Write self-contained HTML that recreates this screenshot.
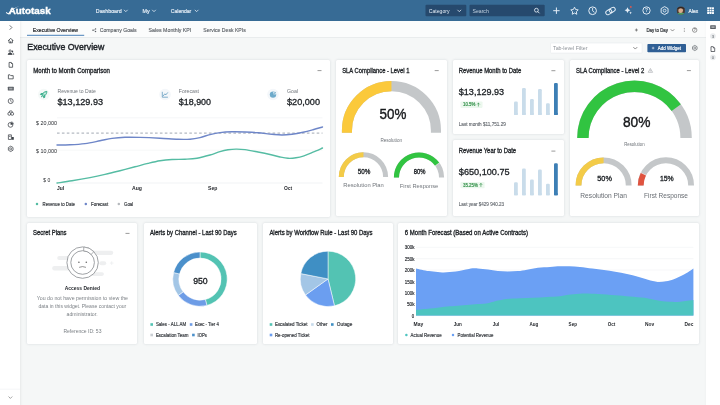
<!DOCTYPE html>
<html lang="en"><head><meta charset="utf-8"><title>Autotask - Executive Overview</title>
<style>
html,body{margin:0;padding:0}
body{width:720px;height:405px;overflow:hidden;background:#f5f7f7;font-family:"Liberation Sans", sans-serif;position:relative}
#app{position:absolute;left:0;top:0;width:720px;height:405px;filter:blur(.4px)}
.hdr{position:absolute;left:-6px;top:-6px;width:732px;height:27px;background:#376b95}
.lside{position:absolute;left:-6px;top:21px;width:26px;height:392px;background:#fff;box-shadow:1px 0 2px rgba(0,0,0,.06)}
.rside{position:absolute;left:706.3px;top:21px;width:20px;height:392px;background:#fff;box-shadow:-1px 0 1.5px rgba(0,0,0,.02)}
.tabs{position:absolute;left:20px;top:21px;width:686.3px;height:15.6px;background:#fbfcfc;border-bottom:.5px solid #e9eced}
.card{position:absolute;background:#fff;border-radius:1.5px;box-shadow:0 0 2.5px rgba(40,60,80,.17)}
.box{position:absolute}
svg{position:absolute;left:0;top:0}
svg text{font-family:"Liberation Sans", sans-serif;white-space:pre}
</style></head><body><div id="app">
<div class="tabs"></div>
<div class="card" style="left:27px;top:60px;width:302.5px;height:156.5px"></div>
<div class="card" style="left:335.5px;top:60px;width:111.3px;height:156.3px"></div>
<div class="card" style="left:453.1px;top:59.8px;width:111.2px;height:74.5px"></div>
<div class="card" style="left:453.1px;top:140.3px;width:111.2px;height:75.7px"></div>
<div class="card" style="left:570px;top:60px;width:129px;height:156.2px"></div>
<div class="card" style="left:27px;top:223px;width:110px;height:121.3px"></div>
<div class="card" style="left:144px;top:223px;width:113px;height:121.3px"></div>
<div class="card" style="left:263px;top:223px;width:129.5px;height:121.3px"></div>
<div class="card" style="left:398.3px;top:223px;width:300.9px;height:121.3px"></div>
<div class="lside"></div>
<div class="rside"></div>
<div class="hdr"></div>
<svg width="720" height="405" viewBox="0 0 720 405">
<text x="8.8" y="13.8" font-size="8.3" font-weight="700" fill="#fff" stroke="#fff" stroke-width="0.35" textLength="41.8" lengthAdjust="spacingAndGlyphs">Autotask</text>
<path d="M6.1 12.1 L8.3 13.3 C10.6 10.3 14.2 7.8 19.4 6.1 C14.4 8.5 11.2 11.1 8.6 14.5 L5.9 12.9 Z" fill="#fff" />
<text x="95.80" y="12.50" font-size="5.3" fill="#e4edf6" textLength="26.00" lengthAdjust="spacingAndGlyphs" stroke="#e4edf6" stroke-width="0.180">Dashboard</text>
<path d="M124.25 10.12 L125.80 11.68 L127.35 10.12" fill="none" stroke="#e4edf6" stroke-width="0.8" stroke-linecap="round" stroke-linejoin="round"/>
<text x="142.50" y="12.50" font-size="5.3" fill="#e4edf6" textLength="7.10" lengthAdjust="spacingAndGlyphs" stroke="#e4edf6" stroke-width="0.180">My</text>
<path d="M152.45 10.12 L154.00 11.68 L155.55 10.12" fill="none" stroke="#e4edf6" stroke-width="0.8" stroke-linecap="round" stroke-linejoin="round"/>
<text x="170.80" y="12.50" font-size="5.3" fill="#e4edf6" textLength="20.50" lengthAdjust="spacingAndGlyphs" stroke="#e4edf6" stroke-width="0.180">Calendar</text>
<path d="M195.05 10.12 L196.60 11.68 L198.15 10.12" fill="none" stroke="#e4edf6" stroke-width="0.8" stroke-linecap="round" stroke-linejoin="round"/>
<rect x="425.50" y="4.70" width="40.80" height="11.60" fill="#26496d" rx="1" />
<text x="428.80" y="12.50" font-size="5.3" fill="#e4edf6" textLength="20.70" lengthAdjust="spacingAndGlyphs">Category</text>
<path d="M457.75 10.12 L459.30 11.68 L460.85 10.12" fill="none" stroke="#e4edf6" stroke-width="0.8" stroke-linecap="round" stroke-linejoin="round"/>
<rect x="469.50" y="4.70" width="75.20" height="11.60" fill="#26496d" rx="1" />
<text x="472.50" y="12.50" font-size="5.3" fill="#c3d3e2" textLength="16.30" lengthAdjust="spacingAndGlyphs">Search</text>
<circle cx="536.40" cy="10.20" r="1.90" fill="none" stroke="#e4edf6" stroke-width="0.85" />
<line x1="537.80" y1="11.60" x2="539.20" y2="13.00" stroke="#e4edf6" stroke-width="0.85" stroke-linecap="round"/>
<line x1="553.20" y1="10.70" x2="559.60" y2="10.70" stroke="#e4edf6" stroke-width="1.0" />
<line x1="556.40" y1="7.50" x2="556.40" y2="13.90" stroke="#e4edf6" stroke-width="1.0" />
<path d="M574.50 7.20 L575.65 9.52 L578.21 9.89 L576.35 11.70 L576.79 14.26 L574.50 13.05 L572.21 14.26 L572.65 11.70 L570.79 9.89 L573.35 9.52 Z" fill="none" stroke="#e4edf6" stroke-width="0.95" stroke-linejoin="round"/>
<circle cx="592.60" cy="10.75" r="3.85" fill="none" stroke="#e4edf6" stroke-width="1.0" />
<path d="M592.6 8.4 L592.6 10.9 L594.2 12.1" fill="none" stroke="#e4edf6" stroke-width="0.9" stroke-linecap="round" stroke-linejoin="round"/>
<g fill="none" stroke="#e4edf6" stroke-width="0.95" transform="rotate(-32 610.5 11)"><rect x="605.3" y="8.9" width="6.3" height="4.2" rx="2.1"/><rect x="609.4" y="8.9" width="6.3" height="4.2" rx="2.1"/></g>
<path d="M627.5 7.299999999999999 Q627.906 9.793999999999999 630.4 10.2 Q627.906 10.606 627.5 13.1 Q627.094 10.606 624.6 10.2 Q627.094 9.793999999999999 627.5 7.299999999999999 Z" fill="#e4edf6" />
<path d="M630.6 11.4 Q630.796 12.604000000000001 632.0 12.8 Q630.796 12.996 630.6 14.200000000000001 Q630.404 12.996 629.2 12.8 Q630.404 12.604000000000001 630.6 11.4 Z" fill="#e4edf6" />
<circle cx="630.80" cy="6.90" r="0.95" fill="#e2574c" />
<circle cx="646.50" cy="10.50" r="3.65" fill="none" stroke="#e4edf6" stroke-width="0.95" />
<text x="646.50" y="12.20" font-size="4.8" fill="#e4edf6" font-weight="700" text-anchor="middle">?</text>
<path d="M664.60 6.60 L668.06 8.60 L668.06 12.60 L664.60 14.60 L661.14 12.60 L661.14 8.60 Z" fill="none" stroke="#e4edf6" stroke-width="0.95" stroke-linejoin="round"/>
<circle cx="664.60" cy="10.60" r="1.40" fill="none" stroke="#e4edf6" stroke-width="0.855" />
<clipPath id="av"><circle cx="680.9" cy="10.7" r="4.1"/></clipPath><g clip-path="url(#av)"><rect x="676" y="6" width="10" height="10" fill="#4a3a33"/><ellipse cx="680.7" cy="10.6" rx="2.3" ry="2.6" fill="#d9ad8f"/><path d="M676.5 9.3 Q680.8 4.5 685.2 9.3 Q680.8 7.2 676.5 9.3Z" fill="#2b221e"/><path d="M676 15.5 Q677 12.3 680.8 12.9 Q684.6 12.3 686 15.5Z" fill="#4d9a62"/></g>
<text x="688.60" y="12.67" font-size="5.5" fill="#f0f5fa" textLength="9.50" lengthAdjust="spacingAndGlyphs" stroke="#f0f5fa" stroke-width="0.187">Alex</text>
<rect x="707.20" y="7.25" width="1.95" height="1.95" fill="#fff" rx="0.25" />
<rect x="707.20" y="9.65" width="1.95" height="1.95" fill="#fff" rx="0.25" />
<rect x="707.20" y="12.05" width="1.95" height="1.95" fill="#fff" rx="0.25" />
<rect x="709.60" y="7.25" width="1.95" height="1.95" fill="#fff" rx="0.25" />
<rect x="709.60" y="9.65" width="1.95" height="1.95" fill="#fff" rx="0.25" />
<rect x="709.60" y="12.05" width="1.95" height="1.95" fill="#fff" rx="0.25" />
<rect x="712.00" y="7.25" width="1.95" height="1.95" fill="#fff" rx="0.25" />
<rect x="712.00" y="9.65" width="1.95" height="1.95" fill="#fff" rx="0.25" />
<rect x="712.00" y="12.05" width="1.95" height="1.95" fill="#fff" rx="0.25" />
<path d="M10 25.6 L11.9 27.5 L10 29.4" fill="none" stroke="#4a4f55" stroke-width="0.8" stroke-linecap="round" stroke-linejoin="round"/>
<g transform="translate(0.4 0.65)">
<path d="M8 40 L10.3 37.6 L12.6 40 M8.6 39.6 L8.6 42.2 L12 42.2 L12 39.6" fill="none" stroke="#3d4248" stroke-width="0.8" stroke-linejoin="round" stroke-linecap="round"/>
<rect x="9.80" y="40.60" width="1.00" height="1.60" fill="#3d4248" />
<circle cx="9.70" cy="50.40" r="1.15" fill="none" stroke="#3d4248" stroke-width="0.75" />
<path d="M7.7 53.8 C7.7 51.9 11.7 51.9 11.7 53.8 Z" fill="#3d4248" stroke="#3d4248" stroke-width="0.75" stroke-linejoin="round"/>
<circle cx="12.00" cy="50.70" r="0.85" fill="#3d4248" />
<path d="M11.8 52.1 C13 52.1 13.4 52.9 13.4 53.8 L12.4 53.8" fill="none" stroke="#3d4248" stroke-width="0.6" />
<path d="M8.7 61.8 L10.9 61.8 L12.2 63.1 L12.2 66.6 L8.7 66.6 Z" fill="none" stroke="#3d4248" stroke-width="0.8" stroke-linejoin="round"/>
<path d="M10.7 61.9 L10.7 63.3 L12.1 63.3 Z" fill="#3d4248" />
<path d="M8 74.2 L9.7 74.2 L10.4 75 L12.8 75 L12.8 78.2 L8 78.2 Z" fill="none" stroke="#3d4248" stroke-width="0.8" stroke-linejoin="round"/>
<rect x="7.40" y="86.20" width="6.00" height="3.70" fill="#5a5f65" rx="0.5" />
<rect x="8.70" y="87.20" width="3.40" height="1.70" fill="#fff" rx="0.2" opacity="0.45"/>
<circle cx="10.30" cy="100.40" r="2.50" fill="none" stroke="#3d4248" stroke-width="0.75" />
<path d="M10.3 98.9 L10.3 100.6 L11.1 101.2" fill="none" stroke="#3d4248" stroke-width="0.6" stroke-linecap="round"/>
<circle cx="8.90" cy="113.20" r="1.45" fill="none" stroke="#3d4248" stroke-width="0.75" />
<circle cx="11.80" cy="113.20" r="1.45" fill="none" stroke="#3d4248" stroke-width="0.75" />
<path d="M8.6 111.7 L9.3 110.3 L11.4 110.3 L12.1 111.7" fill="none" stroke="#3d4248" stroke-width="0.75" stroke-linejoin="round"/>
<circle cx="10.10" cy="124.20" r="2.40" fill="none" stroke="#3d4248" stroke-width="0.75" />
<path d="M10.1 124.2 L10.1 121.8 A2.4 2.4 0 0 1 12.5 124.2 Z" fill="#3d4248" />
<path d="M10.9 121.1 A2.6 2.6 0 0 1 13.2 123.5" fill="none" stroke="#3d4248" stroke-width="0.6" />
<path d="M8 138.8 L8 134.2 L11 134.2 L11 138.8 Z" fill="none" stroke="#3d4248" stroke-width="0.75" stroke-linejoin="round"/>
<rect x="11.20" y="136.40" width="2.20" height="2.80" fill="#3d4248" rx="0.3" />
<rect x="8.80" y="135.20" width="1.30" height="0.90" fill="#3d4248" />
<path d="M10.30 145.50 L12.64 146.85 L12.64 149.55 L10.30 150.90 L7.96 149.55 L7.96 146.85 Z" fill="none" stroke="#3d4248" stroke-width="0.75" stroke-linejoin="round"/>
<circle cx="10.30" cy="148.20" r="1.03" fill="none" stroke="#3d4248" stroke-width="0.675" />
</g>
<line x1="0.00" y1="389.20" x2="20.00" y2="389.20" stroke="#e9ecee" stroke-width="0.5" />
<path d="M8.80 396.80 L10.40 398.40 L12.00 396.80" fill="none" stroke="#666" stroke-width="0.6" stroke-linecap="round" stroke-linejoin="round"/>
<text x="32.80" y="32.10" font-size="5.3" fill="#26292e" textLength="45.20" lengthAdjust="spacingAndGlyphs" stroke="#26292e" stroke-width="0.180">Executive Overview</text>
<rect x="27.00" y="34.80" width="57.20" height="1.00" fill="#4a80b9" />
<circle cx="95.60" cy="28.90" r="0.65" fill="#585d63" />
<circle cx="95.60" cy="31.50" r="0.65" fill="#585d63" />
<circle cx="92.90" cy="30.20" r="0.65" fill="#585d63" />
<path d="M95.6 28.9 L92.9 30.2 L95.6 31.5" fill="none" stroke="#585d63" stroke-width="0.4" />
<text x="99.70" y="32.10" font-size="5.3" fill="#585d63" textLength="36.90" lengthAdjust="spacingAndGlyphs" stroke="#585d63" stroke-width="0.12">Company Goals</text>
<text x="148.60" y="32.10" font-size="5.3" fill="#585d63" textLength="42.70" lengthAdjust="spacingAndGlyphs" stroke="#585d63" stroke-width="0.12">Sales Monthly KPI</text>
<text x="203.30" y="32.10" font-size="5.3" fill="#585d63" textLength="42.50" lengthAdjust="spacingAndGlyphs" stroke="#585d63" stroke-width="0.12">Service Desk KPIs</text>
<line x1="634.90" y1="30.00" x2="637.90" y2="30.00" stroke="#444" stroke-width="0.6" />
<line x1="636.40" y1="28.50" x2="636.40" y2="31.50" stroke="#444" stroke-width="0.6" />
<text x="646.40" y="31.96" font-size="5.2" fill="#1f2328" textLength="21.50" lengthAdjust="spacingAndGlyphs" stroke="#1f2328" stroke-width="0.177">Day to Day</text>
<path d="M671.00 29.55 L672.50 31.05 L674.00 29.55" fill="none" stroke="#444" stroke-width="0.6" stroke-linecap="round" stroke-linejoin="round"/>
<circle cx="684.20" cy="28.50" r="0.40" fill="#444" />
<circle cx="684.20" cy="30.00" r="0.40" fill="#444" />
<circle cx="684.20" cy="31.50" r="0.40" fill="#444" />
<circle cx="694.70" cy="30.00" r="2.25" fill="none" stroke="#555" stroke-width="0.6" />
<text x="694.70" y="31.15" font-size="3.3" fill="#555" font-weight="700" text-anchor="middle">?</text>
<text x="27.3" y="50.2" font-size="9.8" fill="#1f2328" stroke="#1f2328" stroke-width="0.45" textLength="77" lengthAdjust="spacingAndGlyphs">Executive Overview</text>
<rect x="550.50" y="43.00" width="91.60" height="10.10" fill="#fff" rx="1" stroke="#e3e6e9" stroke-width="0.5"/>
<text x="553.00" y="50.00" font-size="5.3" fill="#8d9298" textLength="34.50" lengthAdjust="spacingAndGlyphs">Tab-level Filter</text>
<path d="M633.60 47.35 L635.30 49.05 L637.00 47.35" fill="none" stroke="#555" stroke-width="0.65" stroke-linecap="round" stroke-linejoin="round"/>
<rect x="647.40" y="43.90" width="38.60" height="8.30" fill="#2f5f95" rx="0.8" />
<line x1="651.80" y1="48.05" x2="654.40" y2="48.05" stroke="#fff" stroke-width="0.55" />
<line x1="653.10" y1="46.75" x2="653.10" y2="49.35" stroke="#fff" stroke-width="0.55" />
<text x="657.80" y="49.93" font-size="5.1" fill="#fff" textLength="23.30" lengthAdjust="spacingAndGlyphs" stroke="#fff" stroke-width="0.173">Add Widget</text>
<path d="M694.80 45.40 L697.05 46.70 L697.05 49.30 L694.80 50.60 L692.55 49.30 L692.55 46.70 Z" fill="none" stroke="#60656b" stroke-width="0.7" stroke-linejoin="round"/>
<circle cx="694.80" cy="48.00" r="0.99" fill="none" stroke="#60656b" stroke-width="0.63" />
<rect x="710.20" y="25.30" width="5.60" height="3.70" fill="#5a5f65" rx="0.5" />
<rect x="711.40" y="26.30" width="3.20" height="1.70" fill="#fff" rx="0.2" opacity="0.45"/>
<circle cx="712.90" cy="36.10" r="2.90" fill="#e9ebed" />
<text x="712.90" y="37.60" font-size="4.3" fill="#5d6268" text-anchor="middle">3</text>
<path d="M711 46.7 L713.3 46.7 L714.7 48.1 L714.7 51.5 L711 51.5 Z" fill="none" stroke="#3d4248" stroke-width="0.75" stroke-linejoin="round"/>
<path d="M713.1 46.8 L713.1 48.3 L714.6 48.3 Z" fill="#3d4248" />
<circle cx="712.90" cy="57.30" r="2.90" fill="#e9ebed" />
<text x="712.90" y="58.80" font-size="4.3" fill="#5d6268" text-anchor="middle">0</text>
<text x="33.20" y="72.50" font-size="6.4" fill="#202428" textLength="76.80" lengthAdjust="spacingAndGlyphs" stroke="#202428" stroke-width="0.3">Month to Month Comparison</text>
<line x1="317.50" y1="70.60" x2="321.50" y2="70.60" stroke="#555" stroke-width="0.6" />
<circle cx="43.80" cy="94.50" r="5.80" fill="#f5f9f8" />
<g transform="translate(44.1 94.2) rotate(45)" stroke="#35ab88" stroke-width="0.75" stroke-linejoin="round" fill="#8fd6bf"><path d="M0 -4 C1.8 -2.4 1.8 0.6 1.2 2 L-1.2 2 C-1.8 0.6 -1.8 -2.4 0 -4 Z"/><path d="M-1.4 0.3 L-2.7 1.7 L-2.4 2.9 L-1.2 2 Z M1.4 0.3 L2.7 1.7 L2.4 2.9 L1.2 2 Z" fill="#35ab88"/><path d="M-0.5 2.6 L0 3.8 L0.5 2.6" fill="none"/><circle cx="0" cy="-1.2" r="0.6" fill="#fff" stroke="none"/></g>
<circle cx="165.00" cy="94.50" r="5.80" fill="#f4f7fa" />
<path d="M162.3 91.8 L162.3 97.2 L167.9 97.2" fill="none" stroke="#4f8fb8" stroke-width="0.7" stroke-linejoin="round"/>
<path d="M163.4 95.7 L164.8 93.8 L165.8 94.9 L167.6 92.7" fill="none" stroke="#4f8fb8" stroke-width="0.7" stroke-linejoin="round" stroke-linecap="round"/>
<circle cx="273.00" cy="94.50" r="5.80" fill="#f4f7fa" />
<circle cx="273.00" cy="94.60" r="3.20" fill="#6fabcb" />
<path d="M273 94.6 L273 91.4 A3.2 3.2 0 0 1 276.2 94.6 Z" fill="#c4deec" />
<path d="M273 94.6 L275.7 91.9" fill="none" stroke="#3f86ad" stroke-width="0.6" />
<text x="57.50" y="92.96" font-size="5.2" fill="#71767c" textLength="38.30" lengthAdjust="spacingAndGlyphs">Revenue to Date</text>
<text x="57.50" y="104.50" font-size="9.2" fill="#202428" textLength="45.50" lengthAdjust="spacingAndGlyphs" stroke="#202428" stroke-width="0.3">$13,129.93</text>
<text x="178.80" y="92.96" font-size="5.2" fill="#71767c" textLength="20.20" lengthAdjust="spacingAndGlyphs">Forecast</text>
<text x="178.80" y="104.50" font-size="9.2" fill="#202428" textLength="32.20" lengthAdjust="spacingAndGlyphs" stroke="#202428" stroke-width="0.3">$18,900</text>
<text x="287.00" y="92.96" font-size="5.2" fill="#71767c" textLength="11.00" lengthAdjust="spacingAndGlyphs">Goal</text>
<text x="287.00" y="104.50" font-size="9.2" fill="#202428" textLength="33.00" lengthAdjust="spacingAndGlyphs" stroke="#202428" stroke-width="0.3">$20,000</text>
<line x1="57.00" y1="117.80" x2="322.50" y2="117.80" stroke="#eceff1" stroke-width="0.5" />
<line x1="57.00" y1="150.20" x2="322.50" y2="150.20" stroke="#eceff1" stroke-width="0.5" />
<line x1="57.00" y1="183.00" x2="322.50" y2="183.00" stroke="#e3e6e9" stroke-width="0.5" />
<text x="36.00" y="124.56" font-size="5.2" fill="#26292e" textLength="21.00" lengthAdjust="spacingAndGlyphs">$ 20,000</text>
<text x="36.00" y="153.06" font-size="5.2" fill="#26292e" textLength="21.00" lengthAdjust="spacingAndGlyphs">$ 10,000</text>
<text x="43.20" y="181.96" font-size="5.2" fill="#26292e" textLength="7.00" lengthAdjust="spacingAndGlyphs">$ 0</text>
<line x1="57.00" y1="133.10" x2="322.50" y2="133.10" stroke="#8a93a0" stroke-width="0.8" stroke-dasharray="2.6 2.3"/>
<path d="M57.00 145.00 C59.17 144.97 65.33 145.03 70.00 144.80 C74.67 144.57 80.00 144.27 85.00 143.60 C90.00 142.93 95.50 141.67 100.00 140.80 C104.50 139.93 107.83 138.98 112.00 138.40 C116.17 137.82 120.33 137.47 125.00 137.30 C129.67 137.13 134.17 137.25 140.00 137.40 C145.83 137.55 153.67 137.88 160.00 138.20 C166.33 138.52 173.00 139.13 178.00 139.30 C183.00 139.47 186.33 139.48 190.00 139.20 C193.67 138.92 196.67 138.37 200.00 137.60 C203.33 136.83 206.67 135.43 210.00 134.60 C213.33 133.77 216.33 133.07 220.00 132.60 C223.67 132.13 227.83 131.90 232.00 131.80 C236.17 131.70 240.67 131.83 245.00 132.00 C249.33 132.17 253.50 132.42 258.00 132.80 C262.50 133.18 268.00 133.93 272.00 134.30 C276.00 134.67 278.67 135.02 282.00 135.00 C285.33 134.98 288.50 134.67 292.00 134.20 C295.50 133.73 299.50 132.95 303.00 132.20 C306.50 131.45 309.75 130.57 313.00 129.70 C316.25 128.83 320.92 127.45 322.50 127.00" fill="none" stroke="#6e86c8" stroke-width="1.4" stroke-linecap="round"/>
<path d="M57.00 183.00 C59.50 182.63 66.50 181.70 72.00 180.80 C77.50 179.90 84.50 178.67 90.00 177.60 C95.50 176.53 100.00 175.55 105.00 174.40 C110.00 173.25 115.00 171.97 120.00 170.70 C125.00 169.43 130.33 168.02 135.00 166.80 C139.67 165.58 143.83 164.40 148.00 163.40 C152.17 162.40 156.00 161.45 160.00 160.80 C164.00 160.15 167.83 159.77 172.00 159.50 C176.17 159.23 180.83 159.42 185.00 159.20 C189.17 158.98 192.83 158.90 197.00 158.20 C201.17 157.50 206.17 156.10 210.00 155.00 C213.83 153.90 217.00 152.47 220.00 151.60 C223.00 150.73 225.33 150.22 228.00 149.80 C230.67 149.38 233.17 149.13 236.00 149.10 C238.83 149.07 241.33 149.12 245.00 149.60 C248.67 150.08 253.83 151.18 258.00 152.00 C262.17 152.82 266.33 153.67 270.00 154.50 C273.67 155.33 277.00 156.37 280.00 157.00 C283.00 157.63 285.33 158.17 288.00 158.30 C290.67 158.43 293.33 158.22 296.00 157.80 C298.67 157.38 301.17 156.73 304.00 155.80 C306.83 154.87 309.92 153.50 313.00 152.20 C316.08 150.90 320.92 148.70 322.50 148.00" fill="none" stroke="#55bca3" stroke-width="1.4" stroke-linecap="round"/>
<text x="57.00" y="189.75" font-size="4.9" fill="#26292e" textLength="7.20" lengthAdjust="spacingAndGlyphs" font-weight="700">Jul</text>
<text x="132.00" y="189.75" font-size="4.9" fill="#26292e" textLength="10.00" lengthAdjust="spacingAndGlyphs" font-weight="700">Aug</text>
<text x="208.00" y="189.75" font-size="4.9" fill="#26292e" textLength="9.30" lengthAdjust="spacingAndGlyphs" font-weight="700">Sep</text>
<text x="284.00" y="189.75" font-size="4.9" fill="#26292e" textLength="8.20" lengthAdjust="spacingAndGlyphs" font-weight="700">Oct</text>
<circle cx="37.00" cy="203.90" r="1.25" fill="#55bca3" />
<text x="42.50" y="205.52" font-size="4.8" fill="#33373c" textLength="32.50" lengthAdjust="spacingAndGlyphs" stroke="#33373c" stroke-width="0.163">Revenue to Date</text>
<circle cx="85.80" cy="203.90" r="1.25" fill="#6e86c8" />
<text x="91.00" y="205.52" font-size="4.8" fill="#33373c" textLength="17.20" lengthAdjust="spacingAndGlyphs" stroke="#33373c" stroke-width="0.163">Forecast</text>
<circle cx="118.80" cy="203.90" r="1.25" fill="#b5b9bd" />
<text x="124.00" y="205.52" font-size="4.8" fill="#33373c" textLength="9.20" lengthAdjust="spacingAndGlyphs" stroke="#33373c" stroke-width="0.163">Goal</text>
<text x="342.20" y="72.50" font-size="6.4" fill="#202428" textLength="67.30" lengthAdjust="spacingAndGlyphs" stroke="#202428" stroke-width="0.3">SLA Compliance - Level 1</text>
<line x1="434.70" y1="70.60" x2="438.70" y2="70.60" stroke="#555" stroke-width="0.6" />
<path d="M346.95 132.80 L346.95 130.60 A44.5 44.5 0 0 1 435.95 130.60 L435.95 132.80" fill="none" stroke="#c4c7c9" stroke-width="10.1" />
<path d="M346.95 132.80 L346.95 130.60 A44.5 44.5 0 0 1 391.45 86.10" fill="none" stroke="#fbc93b" stroke-width="10.1" />
<text x="379.5" y="119.4" font-size="15.3" fill="#16181b" stroke="#16181b" stroke-width="0.4" textLength="26.8" lengthAdjust="spacingAndGlyphs">50%</text>
<text x="380.40" y="141.58" font-size="4.7" fill="#6d7278" textLength="21.60" lengthAdjust="spacingAndGlyphs">Resolution</text>
<path d="M341.30 177.00 L341.30 177.00 A22.15 22.15 0 0 1 385.60 177.00 L385.60 177.00" fill="none" stroke="#c4c7c9" stroke-width="5" />
<path d="M341.30 177.00 L341.30 177.00 A22.15 22.15 0 0 1 363.45 154.85" fill="none" stroke="#f3cb48" stroke-width="5" />
<path d="M396.45 177.60 L396.45 177.60 A22.55 22.55 0 0 1 441.55 177.60 L441.55 177.60" fill="none" stroke="#c4c7c9" stroke-width="5.1" />
<path d="M396.45 177.60 L396.45 177.60 A22.55 22.55 0 0 1 437.24 164.35" fill="none" stroke="#31c441" stroke-width="5.1" />
<line x1="435.02" y1="165.96" x2="439.47" y2="162.73" stroke="#fff" stroke-width="0.5" />
<text x="357.80" y="173.71" font-size="7" fill="#202428" textLength="12.60" lengthAdjust="spacingAndGlyphs" stroke="#202428" stroke-width="0.33">50%</text>
<text x="413.80" y="174.31" font-size="7" fill="#202428" textLength="11.70" lengthAdjust="spacingAndGlyphs" stroke="#202428" stroke-width="0.33">80%</text>
<text x="343.30" y="187.25" font-size="6" fill="#71767c" textLength="40.50" lengthAdjust="spacingAndGlyphs">Resolution Plan</text>
<text x="399.80" y="188.35" font-size="6" fill="#71767c" textLength="38.40" lengthAdjust="spacingAndGlyphs">First Response</text>
<text x="458.80" y="72.60" font-size="6.4" fill="#202428" textLength="62.50" lengthAdjust="spacingAndGlyphs" stroke="#202428" stroke-width="0.3">Revenue Month to Date</text>
<line x1="551.40" y1="70.70" x2="555.40" y2="70.70" stroke="#555" stroke-width="0.6" />
<text x="458.80" y="94.90" font-size="9.2" fill="#202428" textLength="45.30" lengthAdjust="spacingAndGlyphs" stroke="#202428" stroke-width="0.3">$13,129.93</text>
<rect x="460.50" y="101.50" width="22.00" height="6.40" fill="#ecf8ee" rx="0.8" />
<text x="463.00" y="106.42" font-size="4.8" fill="#2a8c42" textLength="12.40" lengthAdjust="spacingAndGlyphs" stroke="#2a8c42" stroke-width="0.163">10.5%</text>
<path d="M478.4 106.1 L478.4 103.1 M477.29999999999995 104.19999999999999 L478.4 103.1 L479.5 104.19999999999999" fill="none" stroke="#2a8c42" stroke-width="0.6" stroke-linecap="round" stroke-linejoin="round"/>
<text x="458.80" y="126.02" font-size="4.8" fill="#62676d" textLength="47.00" lengthAdjust="spacingAndGlyphs" stroke="#62676d" stroke-width="0.12">Last month $11,751.29</text>
<rect x="514.00" y="101.60" width="3.80" height="13.30" fill="#c9dcea" rx="1.2" />
<rect x="514.00" y="112.90" width="3.80" height="2.00" fill="#c9dcea" />
<rect x="522.00" y="88.10" width="3.80" height="26.80" fill="#c9dcea" rx="1.2" />
<rect x="522.00" y="112.90" width="3.80" height="2.00" fill="#c9dcea" />
<rect x="530.00" y="99.00" width="3.80" height="15.90" fill="#c9dcea" rx="1.2" />
<rect x="530.00" y="112.90" width="3.80" height="2.00" fill="#c9dcea" />
<rect x="538.00" y="89.00" width="3.80" height="25.90" fill="#c9dcea" rx="1.2" />
<rect x="538.00" y="112.90" width="3.80" height="2.00" fill="#c9dcea" />
<rect x="546.00" y="103.20" width="3.80" height="11.70" fill="#c9dcea" rx="1.2" />
<rect x="546.00" y="112.90" width="3.80" height="2.00" fill="#c9dcea" />
<rect x="554.00" y="82.90" width="3.80" height="32.00" fill="#3d7fb5" rx="1.2" />
<rect x="554.00" y="112.90" width="3.80" height="2.00" fill="#3d7fb5" />
<text x="458.80" y="153.00" font-size="6.4" fill="#202428" textLength="57.30" lengthAdjust="spacingAndGlyphs" stroke="#202428" stroke-width="0.3">Revenue Year to Date</text>
<line x1="551.40" y1="151.10" x2="555.40" y2="151.10" stroke="#555" stroke-width="0.6" />
<text x="458.80" y="175.30" font-size="9.2" fill="#202428" textLength="50.80" lengthAdjust="spacingAndGlyphs" stroke="#202428" stroke-width="0.3">$650,100.75</text>
<rect x="460.50" y="181.90" width="24.10" height="6.40" fill="#ecf8ee" rx="0.8" />
<text x="463.00" y="186.82" font-size="4.8" fill="#2a8c42" textLength="14.90" lengthAdjust="spacingAndGlyphs" stroke="#2a8c42" stroke-width="0.163">35.25%</text>
<path d="M480.9 186.5 L480.9 183.5 M479.79999999999995 184.6 L480.9 183.5 L482.0 184.6" fill="none" stroke="#2a8c42" stroke-width="0.6" stroke-linecap="round" stroke-linejoin="round"/>
<text x="458.80" y="206.42" font-size="4.8" fill="#62676d" textLength="45.30" lengthAdjust="spacingAndGlyphs" stroke="#62676d" stroke-width="0.12">Last year $429 940.23</text>
<rect x="514.00" y="182.20" width="3.80" height="13.10" fill="#c9dcea" rx="1.2" />
<rect x="514.00" y="193.30" width="3.80" height="2.00" fill="#c9dcea" />
<rect x="522.00" y="168.60" width="3.80" height="26.70" fill="#c9dcea" rx="1.2" />
<rect x="522.00" y="193.30" width="3.80" height="2.00" fill="#c9dcea" />
<rect x="530.00" y="179.50" width="3.80" height="15.80" fill="#c9dcea" rx="1.2" />
<rect x="530.00" y="193.30" width="3.80" height="2.00" fill="#c9dcea" />
<rect x="538.00" y="169.60" width="3.80" height="25.70" fill="#c9dcea" rx="1.2" />
<rect x="538.00" y="193.30" width="3.80" height="2.00" fill="#c9dcea" />
<rect x="546.00" y="183.70" width="3.80" height="11.60" fill="#c9dcea" rx="1.2" />
<rect x="546.00" y="193.30" width="3.80" height="2.00" fill="#c9dcea" />
<rect x="554.00" y="163.30" width="3.80" height="32.00" fill="#3d7fb5" rx="1.2" />
<rect x="554.00" y="193.30" width="3.80" height="2.00" fill="#3d7fb5" />
<text x="576.00" y="72.60" font-size="6.4" fill="#202428" textLength="68.20" lengthAdjust="spacingAndGlyphs" stroke="#202428" stroke-width="0.3">SLA Compliance - Level 2</text>
<path d="M650.4 68.5 L652.6 72.3 L648.2 72.3 Z" fill="none" stroke="#8a8f95" stroke-width="0.5" stroke-linejoin="round"/>
<line x1="650.40" y1="69.90" x2="650.40" y2="71.10" stroke="#8a8f95" stroke-width="0.45" />
<circle cx="650.40" cy="71.70" r="0.22" fill="#8a8f95" />
<line x1="686.90" y1="70.60" x2="690.90" y2="70.60" stroke="#555" stroke-width="0.6" />
<path d="M582.90 138.00 L582.90 138.00 A51.6 51.6 0 0 1 686.10 138.00 L686.10 138.00" fill="none" stroke="#c4c7c9" stroke-width="11.4" />
<path d="M582.90 138.00 L582.90 138.00 A51.6 51.6 0 0 1 676.25 107.67" fill="none" stroke="#31c441" stroke-width="11.4" />
<text x="622.9" y="126.7" font-size="15.3" fill="#16181b" stroke="#16181b" stroke-width="0.4" textLength="27.5" lengthAdjust="spacingAndGlyphs">80%</text>
<text x="624.20" y="146.28" font-size="4.7" fill="#6d7278" textLength="20.40" lengthAdjust="spacingAndGlyphs">Resolution</text>
<path d="M578.50 185.40 L578.50 185.40 A25.1 25.1 0 0 1 628.70 185.40 L628.70 185.40" fill="none" stroke="#c4c7c9" stroke-width="5.8" />
<path d="M578.50 185.40 L578.50 185.40 A25.1 25.1 0 0 1 603.60 160.30" fill="none" stroke="#f3cb48" stroke-width="5.8" />
<path d="M640.70 185.40 L640.70 185.40 A25.2 25.2 0 0 1 691.10 185.40 L691.10 185.40" fill="none" stroke="#c4c7c9" stroke-width="5.8" />
<path d="M640.70 185.40 L640.70 185.40 A25.2 25.2 0 0 1 643.45 173.96" fill="none" stroke="#e0533f" stroke-width="5.8" />
<line x1="646.21" y1="175.37" x2="640.68" y2="172.55" stroke="#fff" stroke-width="0.5" />
<text x="597.30" y="181.26" font-size="7.7" fill="#202428" textLength="14.60" lengthAdjust="spacingAndGlyphs" stroke="#202428" stroke-width="0.33">50%</text>
<text x="659.90" y="181.26" font-size="7.7" fill="#202428" textLength="13.80" lengthAdjust="spacingAndGlyphs" stroke="#202428" stroke-width="0.33">15%</text>
<text x="580.30" y="197.73" font-size="6.8" fill="#686d73" textLength="46.60" lengthAdjust="spacingAndGlyphs">Resolution Plan</text>
<text x="644.10" y="197.73" font-size="6.8" fill="#686d73" textLength="43.90" lengthAdjust="spacingAndGlyphs">First Response</text>
<text x="33.00" y="235.30" font-size="6.4" fill="#202428" textLength="33.50" lengthAdjust="spacingAndGlyphs" stroke="#202428" stroke-width="0.3">Secret Plans</text>
<line x1="125.50" y1="233.40" x2="129.50" y2="233.40" stroke="#555" stroke-width="0.6" />
<rect x="90.00" y="250.70" width="23.30" height="4.20" fill="#eeeff0" rx="2.1" />
<rect x="57.20" y="256.10" width="14.00" height="4.00" fill="#eeeff0" rx="2" />
<rect x="52.20" y="265.90" width="18.00" height="4.50" fill="#eeeff0" rx="2.2" />
<rect x="99.40" y="261.20" width="6.80" height="4.00" fill="#eeeff0" rx="2" />
<path d="M111.7 261.3 L111.7 264.9 M109.9 263.1 L113.5 263.1" fill="none" stroke="#eeeff0" stroke-width="0.9" />
<rect x="90.00" y="272.20" width="13.90" height="3.70" fill="#eeeff0" rx="1.8" />
<circle cx="82.60" cy="262.60" r="15.70" fill="#fff" stroke="#868a8e" stroke-width="0.8" />
<circle cx="82.60" cy="262.50" r="11.80" fill="#fff" stroke="#868a8e" stroke-width="0.8" />
<path d="M83.9 246.95 A15.7 15.7 0 0 1 93.9 251.7 L91.1 254.4 A11.8 11.8 0 0 0 83.6 250.75 Z" fill="#fff" stroke="#868a8e" stroke-width="0.7" stroke-linejoin="round"/>
<circle cx="78.90" cy="262.20" r="0.80" fill="#666" />
<circle cx="86.30" cy="262.20" r="0.80" fill="#666" />
<path d="M79.5 267.2 Q82.5 265.8 85.6 267.2" fill="none" stroke="#666" stroke-width="0.7" stroke-linecap="round"/>
<text x="64.80" y="290.13" font-size="5.1" fill="#26292e" textLength="35.20" lengthAdjust="spacingAndGlyphs" font-weight="700">Access Denied</text>
<text x="36.80" y="300.24" font-size="5.15" fill="#7c8186" textLength="91.20" lengthAdjust="spacingAndGlyphs">You do not have permission to view the</text>
<text x="38.50" y="308.14" font-size="5.15" fill="#7c8186" textLength="87.70" lengthAdjust="spacingAndGlyphs">data in this widget. Please contact your</text>
<text x="66.50" y="315.94" font-size="5.15" fill="#7c8186" textLength="31.10" lengthAdjust="spacingAndGlyphs">administrator.</text>
<text x="63.40" y="332.84" font-size="5.15" fill="#7c8186" textLength="38.10" lengthAdjust="spacingAndGlyphs">Reference ID: 53</text>
<text x="150.00" y="235.30" font-size="6.4" fill="#202428" textLength="86.70" lengthAdjust="spacingAndGlyphs" stroke="#202428" stroke-width="0.3">Alerts by Channel - Last 90 Days</text>
<path d="M200.00 251.90 A27.2 27.2 0 0 1 206.90 305.41 L205.35 299.51 A21.1 21.1 0 0 0 200.00 258.00 Z" fill="#53c3b3" stroke="#fff" stroke-width="0.5" stroke-linejoin="round"/>
<path d="M206.90 305.41 A27.2 27.2 0 0 1 178.28 295.47 L183.15 291.80 A21.1 21.1 0 0 0 205.35 299.51 Z" fill="#6d9ce6" stroke="#fff" stroke-width="0.5" stroke-linejoin="round"/>
<path d="M178.28 295.47 A27.2 27.2 0 0 1 173.61 272.52 L179.53 274.00 A21.1 21.1 0 0 0 183.15 291.80 Z" fill="#a3c6e6" stroke="#fff" stroke-width="0.5" stroke-linejoin="round"/>
<path d="M173.61 272.52 A27.2 27.2 0 0 1 200.00 251.90 L200.00 258.00 A21.1 21.1 0 0 0 179.53 274.00 Z" fill="#4b90cb" stroke="#fff" stroke-width="0.5" stroke-linejoin="round"/>
<text x="193.20" y="283.50" font-size="9.2" fill="#202428" textLength="14.50" lengthAdjust="spacingAndGlyphs" stroke="#202428" stroke-width="0.35">950</text>
<rect x="150.40" y="323.20" width="2.60" height="2.60" fill="#53c3b3" />
<text x="155.90" y="326.22" font-size="4.8" fill="#33373c" textLength="30.30" lengthAdjust="spacingAndGlyphs" stroke="#33373c" stroke-width="0.163">Sales - ALL AM</text>
<rect x="189.80" y="323.20" width="2.60" height="2.60" fill="#6d9ce6" />
<text x="195.00" y="326.22" font-size="4.8" fill="#33373c" textLength="23.80" lengthAdjust="spacingAndGlyphs" stroke="#33373c" stroke-width="0.163">Exec - Tier 4</text>
<rect x="150.40" y="333.70" width="2.60" height="2.60" fill="#c9ced3" />
<text x="155.90" y="336.72" font-size="4.8" fill="#33373c" textLength="32.60" lengthAdjust="spacingAndGlyphs" stroke="#33373c" stroke-width="0.163">Escalation Team</text>
<rect x="192.10" y="333.70" width="2.60" height="2.60" fill="#4b90cb" />
<text x="197.60" y="336.72" font-size="4.8" fill="#33373c" textLength="9.40" lengthAdjust="spacingAndGlyphs" stroke="#33373c" stroke-width="0.163">IOPs</text>
<text x="269.40" y="235.30" font-size="6.4" fill="#202428" textLength="103.20" lengthAdjust="spacingAndGlyphs" stroke="#202428" stroke-width="0.3">Alerts by Workflow Rule - Last 90 Days</text>
<path d="M328 278.9 L328.00 251.20 A27.7 27.7 0 0 1 334.47 305.83 Z" fill="#53c3b3" stroke="#fff" stroke-width="0.5" stroke-linejoin="round"/>
<path d="M328 278.9 L334.47 305.83 A27.7 27.7 0 0 1 305.48 295.02 Z" fill="#6b9ef0" stroke="#fff" stroke-width="0.5" stroke-linejoin="round"/>
<path d="M328 278.9 L305.48 295.02 A27.7 27.7 0 0 1 300.81 273.61 Z" fill="#a3c6e6" stroke="#fff" stroke-width="0.5" stroke-linejoin="round"/>
<path d="M328 278.9 L300.81 273.61 A27.7 27.7 0 0 1 328.00 251.20 Z" fill="#3f8fc4" stroke="#fff" stroke-width="0.5" stroke-linejoin="round"/>
<rect x="269.70" y="323.20" width="2.60" height="2.60" fill="#53c3b3" />
<text x="274.90" y="326.22" font-size="4.8" fill="#33373c" textLength="32.60" lengthAdjust="spacingAndGlyphs" stroke="#33373c" stroke-width="0.163">Escalated Ticket</text>
<rect x="311.10" y="323.20" width="2.60" height="2.60" fill="#c5d9ea" />
<text x="316.60" y="326.22" font-size="4.8" fill="#33373c" textLength="10.80" lengthAdjust="spacingAndGlyphs" stroke="#33373c" stroke-width="0.163">Other</text>
<rect x="331.00" y="323.20" width="2.60" height="2.60" fill="#3f8fc4" />
<text x="336.80" y="326.22" font-size="4.8" fill="#33373c" textLength="15.60" lengthAdjust="spacingAndGlyphs" stroke="#33373c" stroke-width="0.163">Outage</text>
<rect x="269.70" y="333.70" width="2.60" height="2.60" fill="#6b9ef0" />
<text x="274.90" y="336.72" font-size="4.8" fill="#33373c" textLength="34.60" lengthAdjust="spacingAndGlyphs" stroke="#33373c" stroke-width="0.163">Re-opened Ticket</text>
<text x="404.80" y="235.30" font-size="6.4" fill="#202428" textLength="123.20" lengthAdjust="spacingAndGlyphs" stroke="#202428" stroke-width="0.3">6 Month Forecast (Based on Active Contracts)</text>
<line x1="416.00" y1="247.30" x2="693.40" y2="247.30" stroke="#eceff1" stroke-width="0.5" />
<text x="404.80" y="249.48" font-size="4.7" fill="#26292e" textLength="9.70" lengthAdjust="spacingAndGlyphs" stroke="#26292e" stroke-width="0.160">300k</text>
<line x1="416.00" y1="258.70" x2="693.40" y2="258.70" stroke="#eceff1" stroke-width="0.5" />
<text x="404.80" y="260.88" font-size="4.7" fill="#26292e" textLength="9.70" lengthAdjust="spacingAndGlyphs" stroke="#26292e" stroke-width="0.160">250k</text>
<line x1="416.00" y1="270.00" x2="693.40" y2="270.00" stroke="#eceff1" stroke-width="0.5" />
<text x="404.80" y="272.18" font-size="4.7" fill="#26292e" textLength="9.70" lengthAdjust="spacingAndGlyphs" stroke="#26292e" stroke-width="0.160">200k</text>
<line x1="416.00" y1="281.40" x2="693.40" y2="281.40" stroke="#eceff1" stroke-width="0.5" />
<text x="404.80" y="283.58" font-size="4.7" fill="#26292e" textLength="9.70" lengthAdjust="spacingAndGlyphs" stroke="#26292e" stroke-width="0.160">150k</text>
<line x1="416.00" y1="292.80" x2="693.40" y2="292.80" stroke="#eceff1" stroke-width="0.5" />
<text x="404.80" y="294.98" font-size="4.7" fill="#26292e" textLength="9.70" lengthAdjust="spacingAndGlyphs" stroke="#26292e" stroke-width="0.160">100k</text>
<line x1="416.00" y1="304.20" x2="693.40" y2="304.20" stroke="#eceff1" stroke-width="0.5" />
<text x="406.90" y="306.38" font-size="4.7" fill="#26292e" textLength="7.60" lengthAdjust="spacingAndGlyphs" stroke="#26292e" stroke-width="0.160">50k</text>
<line x1="416.00" y1="315.60" x2="693.40" y2="315.60" stroke="#eceff1" stroke-width="0.5" />
<text x="411.80" y="317.78" font-size="4.7" fill="#26292e" textLength="2.40" lengthAdjust="spacingAndGlyphs" stroke="#26292e" stroke-width="0.160">0</text>
<path d="M416.00 268.40 C418.15 268.85 424.53 270.43 428.90 271.10 C433.27 271.77 437.75 272.32 442.20 272.40 C446.65 272.48 451.15 272.18 455.60 271.60 C460.05 271.02 465.20 269.43 468.90 268.90 C472.60 268.37 474.62 268.28 477.80 268.40 C480.98 268.52 484.67 269.15 488.00 269.60 C491.33 270.05 494.47 270.80 497.80 271.10 C501.13 271.40 504.67 271.40 508.00 271.40 C511.33 271.40 514.63 271.38 517.80 271.10 C520.97 270.82 523.67 270.25 527.00 269.70 C530.33 269.15 533.97 268.27 537.80 267.80 C541.63 267.33 546.30 267.15 550.00 266.90 C553.70 266.65 556.73 266.42 560.00 266.30 C563.27 266.18 566.27 266.10 569.60 266.20 C572.93 266.30 576.20 266.52 580.00 266.90 C583.80 267.28 588.40 267.97 592.40 268.50 C596.40 269.03 600.20 269.55 604.00 270.10 C607.80 270.65 611.37 271.13 615.20 271.80 C619.03 272.47 623.20 273.28 627.00 274.10 C630.80 274.92 634.50 275.75 638.00 276.70 C641.50 277.65 644.75 278.93 648.00 279.80 C651.25 280.67 654.50 281.65 657.50 281.90 C660.50 282.15 663.28 281.73 666.00 281.30 C668.72 280.87 670.80 280.42 673.80 279.30 C676.80 278.18 680.73 276.40 684.00 274.60 C687.27 272.80 691.83 269.52 693.40 268.50 L693.4 315.6 L416 315.6 Z" fill="#6ba0f4" />
<path d="M416.00 310.00 C418.33 309.77 425.27 309.15 430.00 308.60 C434.73 308.05 440.23 307.15 444.40 306.70 C448.57 306.25 451.28 306.20 455.00 305.90 C458.72 305.60 462.87 305.20 466.70 304.90 C470.53 304.60 474.30 304.43 478.00 304.10 C481.70 303.77 485.57 303.48 488.90 302.90 C492.23 302.32 495.03 301.27 498.00 300.60 C500.97 299.93 503.03 299.30 506.70 298.90 C510.37 298.50 515.57 298.38 520.00 298.20 C524.43 298.02 528.80 298.00 533.30 297.80 C537.80 297.60 542.55 297.27 547.00 297.00 C551.45 296.73 556.00 296.60 560.00 296.20 C564.00 295.80 567.23 295.03 571.00 294.60 C574.77 294.17 578.10 293.70 582.60 293.60 C587.10 293.50 592.57 293.73 598.00 294.00 C603.43 294.27 609.87 294.80 615.20 295.20 C620.53 295.60 625.12 295.97 630.00 296.40 C634.88 296.83 640.67 297.27 644.50 297.80 C648.33 298.33 650.28 299.05 653.00 299.60 C655.72 300.15 657.97 300.73 660.80 301.10 C663.63 301.47 666.75 301.70 670.00 301.80 C673.25 301.90 676.40 301.98 680.30 301.70 C684.20 301.42 691.22 300.37 693.40 300.10 L693.4 315.6 L416 315.6 Z" fill="#4dc4c0" />
<text x="413.60" y="326.05" font-size="4.9" fill="#26292e" textLength="9.70" lengthAdjust="spacingAndGlyphs" font-weight="700">May</text>
<text x="453.70" y="326.05" font-size="4.9" fill="#26292e" textLength="8.10" lengthAdjust="spacingAndGlyphs" font-weight="700">Jun</text>
<text x="492.80" y="326.05" font-size="4.9" fill="#26292e" textLength="6.50" lengthAdjust="spacingAndGlyphs" font-weight="700">Jul</text>
<text x="529.60" y="326.05" font-size="4.9" fill="#26292e" textLength="8.80" lengthAdjust="spacingAndGlyphs" font-weight="700">Aug</text>
<text x="568.60" y="326.05" font-size="4.9" fill="#26292e" textLength="8.40" lengthAdjust="spacingAndGlyphs" font-weight="700">Sep</text>
<text x="607.70" y="326.05" font-size="4.9" fill="#26292e" textLength="7.50" lengthAdjust="spacingAndGlyphs" font-weight="700">Oct</text>
<text x="645.10" y="326.05" font-size="4.9" fill="#26292e" textLength="9.20" lengthAdjust="spacingAndGlyphs" font-weight="700">Nov</text>
<text x="684.60" y="326.05" font-size="4.9" fill="#26292e" textLength="8.80" lengthAdjust="spacingAndGlyphs" font-weight="700">Dec</text>
<circle cx="406.40" cy="335.00" r="1.25" fill="#4dc4c0" />
<text x="410.60" y="336.72" font-size="4.8" fill="#33373c" textLength="31.00" lengthAdjust="spacingAndGlyphs" stroke="#33373c" stroke-width="0.163">Actual Revenue</text>
<circle cx="453.00" cy="335.00" r="1.25" fill="#6ba0f4" />
<text x="457.60" y="336.72" font-size="4.8" fill="#33373c" textLength="35.80" lengthAdjust="spacingAndGlyphs" stroke="#33373c" stroke-width="0.163">Potential Revenue</text>
</svg></div></body></html>
